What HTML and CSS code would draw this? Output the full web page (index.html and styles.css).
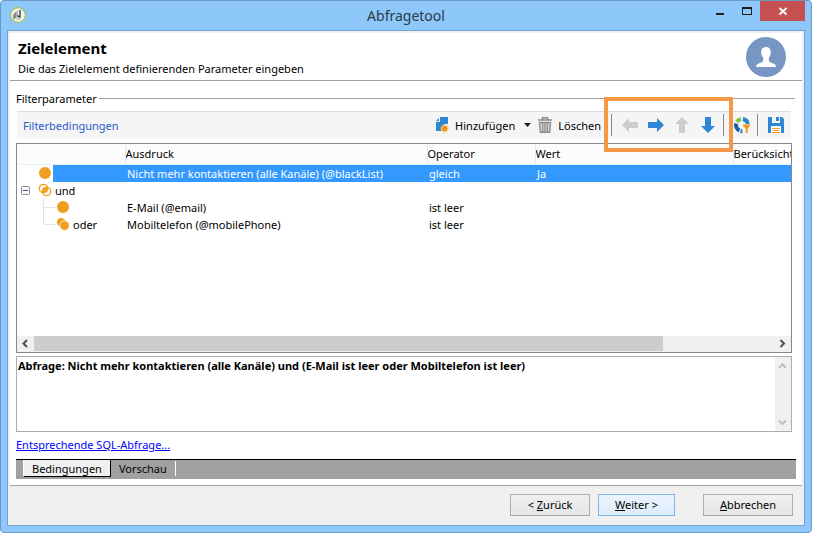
FILE: index.html
```html
<!DOCTYPE html>
<html lang="de">
<head>
<meta charset="utf-8">
<title>Abfragetool</title>
<link rel="stylesheet" href="styles.css">
</head>
<body>
<div class="window">
  <header class="titlebar">
    <svg class="app-icon" viewBox="0 0 16 16" aria-hidden="true">
      <circle cx="8" cy="8" r="7.4" fill="#f4f4ee" stroke="#a3c04c" stroke-width="1.1"/>
      <path d="M3 7.5 6 4.500v6L4.200 12.500 3 11z" fill="#8b8e8a"/>
      <path d="M6 4.500 8 3.500v6.500L6 11z" fill="#b4b7b2"/>
      <path d="M10 3v7.500M7.500 8.500l2.500 2" stroke="#33363a" stroke-width="1.300" fill="none"/>
      <path d="M6.500 12h4" stroke="#999" stroke-width="1"/>
    </svg>
    <h1 class="caption">Abfragetool</h1>
    <div class="window-buttons">
      <button class="win-button" type="button" aria-label="Minimieren">
        <svg width="10" height="10" viewBox="0 0 10 10"><path d="M1 7h8v2H1z" fill="#1e1e1e"/></svg>
      </button>
      <button class="win-button" type="button" aria-label="Maximieren">
        <svg width="10" height="10" viewBox="0 0 10 10"><path fill-rule="evenodd" d="M0 1h10v8H0zM1 3v5h8V3z" fill="#1e1e1e"/></svg>
      </button>
      <button class="win-button close" type="button" aria-label="Schließen">
        <svg width="10" height="10" viewBox="0 0 10 10"><path d="M1.500 2l7 6.500M8.500 2l-7 6.500" stroke="#fff" stroke-width="1.800"/></svg>
      </button>
    </div>
  </header>

  <main class="client">
    <section class="banner">
      <div class="banner-text">
        <h2 class="heading">Zielelement</h2>
        <p class="subtitle">Die das Zielelement definierenden Parameter eingeben</p>
      </div>
      <svg class="avatar" viewBox="0 0 40 40" aria-hidden="true">
        <circle cx="20" cy="20" r="20" fill="#7896c3"/>
        <path d="M20 10c3.200 0 4.800 2.200 4.800 5.200 0 2.600-.9 4.300-2 5.500v2.500c0 1.200 1 1.900 2.600 2.500 3 1.100 4.600 1.800 4.600 4.300H10c0-2.500 1.600-3.200 4.600-4.300 1.600-.6 2.600-1.300 2.600-2.500v-2.500c-1.100-1.200-2-2.900-2-5.500 0-3 1.600-5.200 4.800-5.200z" fill="#fff"/>
      </svg>
    </section>

    <section class="body">
      <h3 class="group-title">Filterparameter</h3>

      <div class="toolbar">
        <span class="toolbar-title">Filterbedingungen</span>
        <button class="tool add" type="button">
          <svg width="14" height="16" viewBox="0 0 14 16" aria-hidden="true">
            <path d="M5 0h8v7H9.500L6 10v4H1V5h4z" fill="#2e86d4"/>
            <path d="M1 4 4 1v3z" fill="#2e86d4"/>
            <path d="M9.500 7.500v8M5.500 11.500h8M6.700 8.700l5.600 5.600M12.300 8.700l-5.600 5.600" stroke="#f5b13c" stroke-width="1.400"/>
            <circle cx="9.500" cy="11.500" r="2.600" fill="#ef920f"/>
          </svg>
          Hinzufügen
          <svg class="caret" width="7" height="4" viewBox="0 0 7 4" aria-hidden="true"><path d="M0 0h7L3.500 4z" fill="#1e1e1e"/></svg>
        </button>
        <button class="tool" type="button">
          <svg width="14" height="16" viewBox="0 0 14 16" aria-hidden="true">
            <path d="M4.500 2.500V.800h5v1.700M0 3h14" fill="none" stroke="#8b8b8b" stroke-width="1.500"/>
            <path d="M1.500 5.500h11l-.8 9.700H2.300z" fill="#d5d5d5" stroke="#8b8b8b" stroke-width="1.400"/>
            <path d="M4.700 6v9M7 6v9M9.300 6v9" stroke="#8b8b8b" stroke-width="1.200"/>
          </svg>
          Löschen
        </button>
        <span class="separator"></span>
        <div class="arrows">
          <button class="icon-button" type="button" disabled aria-label="Nach links">
            <svg width="16" height="16" viewBox="0 0 16 16"><path d="M0 8 7 1v4h9v6H7v4z" fill="#cdcdcd"/></svg>
          </button>
          <button class="icon-button" type="button" aria-label="Nach rechts">
            <svg width="16" height="16" viewBox="0 0 16 16"><path d="M16 8 9 1v4H0v6h9v4z" fill="#2e86d4"/></svg>
          </button>
          <button class="icon-button" type="button" disabled aria-label="Nach oben">
            <svg width="16" height="16" viewBox="0 0 16 16"><path d="M8 0l7 7h-4v9H5V7H1z" fill="#cdcdcd"/></svg>
          </button>
          <button class="icon-button" type="button" aria-label="Nach unten">
            <svg width="16" height="16" viewBox="0 0 16 16"><path d="M8 16l7-7h-4V0H5v9H1z" fill="#2e86d4"/></svg>
          </button>
          <span class="highlight"></span>
        </div>
        <span class="separator"></span>
        <button class="icon-button" type="button" aria-label="Verteilung">
          <svg width="16" height="16" viewBox="0 0 16 16">
            <g fill="none" stroke-width="4">
              <path d="M8.800 2.100a6 6 0 0 1 5 4.900" stroke="#2e86d4"/>
              <path d="M2.900 4.900a6 6 0 0 1 4-2.800" stroke="#7cc142"/>
              <path d="M2.200 6.500a6 6 0 0 0 3.300 7" stroke="#1f5fa8"/>
              <path d="M6.500 13.900a6 6 0 0 0 2 .1" stroke="#2e86d4"/>
            </g>
            <path d="M9 7.500h7v1.500l-2.300 2.500V16h-2v-4.500L9 9z" fill="#f39c1b"/>
          </svg>
        </button>
        <span class="separator"></span>
        <button class="icon-button" type="button" aria-label="Speichern">
          <svg width="16" height="16" viewBox="0 0 16 16">
            <path d="M0 0h4v6h8V0h2l2 2v14h-3V9H3v7H0z" fill="#2e86d4"/>
            <path d="M8 0h3v4H8z" fill="#2e86d4"/>
            <path d="M3 10h10v6H3z" fill="#fff"/>
            <path d="M4 11h8v1H4zM5 13h6v1H5zM4 15h8v1H4z" fill="#f39c1b"/>
          </svg>
        </button>
      </div>

      <div class="grid">
        <table class="conditions">
          <colgroup><col class="c-tree"><col class="c-expr"><col class="c-op"><col class="c-val"><col></colgroup>
          <thead>
            <tr><th></th><th>Ausdruck</th><th>Operator</th><th>Wert</th><th>Berücksicht</th></tr>
          </thead>
          <tbody>
            <tr class="selected">
              <td class="tree">
                <span class="node level-1"><svg width="16" height="16" viewBox="0 0 16 16" aria-hidden="true"><circle cx="8" cy="8" r="6" fill="#ef9f1f"/></svg></span>
              </td>
              <td>Nicht mehr kontaktieren (alle Kanäle) (@blackList)</td><td>gleich</td><td>Ja</td><td></td>
            </tr>
            <tr>
              <td class="tree">
                <span class="node root">
                  <svg class="expander" width="9" height="9" viewBox="0 0 9 9" aria-hidden="true"><rect x=".5" y=".5" width="8" height="8" rx="1" fill="#f7f7f7" stroke="#8e8f8f"/><path d="M2 4.500h5" stroke="#3b5a9a"/></svg>
                  <svg width="16" height="16" viewBox="0 0 16 16" aria-hidden="true"><g fill="none" stroke="#ef9f1f" stroke-width="1.300"><circle cx="6.500" cy="6.500" r="4.200"/><circle cx="9.500" cy="9.500" r="4.200"/></g><path d="M5.300 9.500A4.200 4.200 0 0 1 9.500 5.300 4.200 4.200 0 0 1 10.700 6.500 4.200 4.200 0 0 1 6.500 10.700z" fill="#ef9f1f"/></svg>
                  und
                </span>
              </td>
              <td></td><td></td><td></td><td></td>
            </tr>
            <tr>
              <td class="tree">
                <span class="node level-2"><svg class="guide" width="12" height="17" viewBox="0 0 12 17" aria-hidden="true"><path d="M.5 0v17M1 8.500h11" fill="none" stroke="#e4e4e4"/></svg><svg width="16" height="16" viewBox="0 0 16 16" aria-hidden="true"><circle cx="8" cy="8" r="6" fill="#ef9f1f"/></svg></span>
              </td>
              <td>E-Mail (@email)</td><td>ist leer</td><td></td><td></td>
            </tr>
            <tr>
              <td class="tree">
                <span class="node level-2"><svg class="guide" width="12" height="17" viewBox="0 0 12 17" aria-hidden="true"><path d="M.5 0v8.500H12" fill="none" stroke="#e4e4e4"/></svg><svg width="16" height="16" viewBox="0 0 16 16" aria-hidden="true"><circle cx="6.200" cy="6.200" r="4.300" fill="#ef9f1f"/><circle cx="9.600" cy="9.600" r="4.800" fill="#ef9f1f" stroke="#fff" stroke-width=".8"/></svg>oder</span>
              </td>
              <td>Mobiltelefon (@mobilePhone)</td><td>ist leer</td><td></td><td></td>
            </tr>
          </tbody>
        </table>
        <div class="hscroll">
          <svg class="chevron" viewBox="0 0 17 15" aria-hidden="true"><path d="M10 4 6.500 7.500 10 11" fill="none" stroke="#505050" stroke-width="2"/></svg>
          <span class="track"><span class="thumb"></span></span>
          <svg class="chevron" viewBox="0 0 17 15" aria-hidden="true"><path d="M6.500 4 10 7.500 6.500 11" fill="none" stroke="#505050" stroke-width="2"/></svg>
        </div>
      </div>

      <div class="summary">
        <textarea class="summary-text" readonly aria-label="Abfrage">Abfrage: Nicht mehr kontaktieren (alle Kanäle) und (E-Mail ist leer oder Mobiltelefon ist leer)</textarea>
        <div class="vscroll">
          <svg width="15" height="17" viewBox="0 0 15 17" aria-hidden="true"><path d="M4 11 7.500 7.500 11 11" fill="none" stroke="#bfbfbf" stroke-width="2"/></svg>
          <svg width="15" height="17" viewBox="0 0 15 17" aria-hidden="true"><path d="M4 6.500 7.500 10 11 6.500" fill="none" stroke="#bfbfbf" stroke-width="2"/></svg>
        </div>
      </div>

      <a class="sql-link" href="#">Entsprechende SQL-Abfrage...</a>

      <div class="tabs" role="tablist">
        <button class="tab active" type="button" role="tab" aria-selected="true">Bedingungen</button>
        <button class="tab" type="button" role="tab" aria-selected="false">Vorschau</button>
      </div>
    </section>

    <footer class="footer">
      <button class="action back" type="button">&lt; <u>Z</u>urück</button>
      <button class="action next" type="button"><u>W</u>eiter &gt;</button>
      <button class="action cancel" type="button"><u>A</u>bbrechen</button>
    </footer>
  </main>
</div>
</body>
</html>
```
FILE: styles.css
```css
* {
  box-sizing: border-box;
}

body {
  display: flex;
  height: 100vh;
  margin: 0;
  padding: 0 11px 11px 0;
  background: #fff;
  color: #000;
  font: 11px/17px "Noto Sans", "Open Sans", sans-serif;
}

button,
textarea {
  font: inherit;
  color: inherit;
}

button {
  margin: 0;
  padding: 0;
  border: 0;
  background: none;
}

svg {
  flex: none;
  display: block;
}

.window {
  flex: 1;
  min-width: 0;
  display: flex;
  flex-direction: column;
  padding: 0 6px 6px;
  border: 1px solid #6a9ac8;
  border-radius: 4px;
  background: #8ec7fa;
}

/* Title bar */
.titlebar {
  display: grid;
  grid-template-columns: 1fr auto 1fr;
  align-items: start;
  height: 29px;
}

.app-icon {
  width: 16px;
  height: 16px;
  margin: 6px 0 0 3px;
}

.caption {
  margin: 0;
  color: #2b3a47;
  font-size: 14px;
  font-weight: 400;
  line-height: 29px;
}

.window-buttons {
  display: flex;
  justify-content: flex-end;
}

.win-button {
  display: flex;
  align-items: center;
  justify-content: center;
  width: 27px;
  height: 20px;
}

.win-button.close {
  width: 45px;
  background: #c75050;
}

/* Client area */
.client {
  flex: 1;
  min-height: 0;
  display: flex;
  flex-direction: column;
  border: 1px solid #6fa3d3;
  background: #fff;
  box-shadow: inset 0 0 0 2px #f0f0f0;
}

.banner {
  display: flex;
  justify-content: space-between;
  margin: 2px 2px 0;
  padding: 4px 16px 3px 8px;
  border-bottom: 1px solid #a0a0a0;
}

.heading {
  margin: 0;
  font-size: 15px;
  font-weight: 700;
  line-height: 22px;
}

.subtitle {
  margin: 1px 0 0;
}

.avatar {
  width: 40px;
  height: 40px;
}

.body {
  flex: 1;
  min-height: 0;
  display: flex;
  flex-direction: column;
  padding: 9px 8px 6px;
}

.group-title {
  display: flex;
  align-items: center;
  gap: 2px;
  margin: 0 1px 4px 0;
  font-size: 11px;
  font-weight: 400;
}

.group-title::after {
  content: "";
  flex: 1;
  height: 1px;
  background: #a0a0a0;
}

/* Toolbar */
.toolbar {
  display: flex;
  align-items: center;
  height: 27px;
  margin: 0 5px 5px 1px;
  padding: 0 7px 0 6px;
  border-top: 1px solid #dadada;
  background: #f5f5f5;
}

.toolbar-title {
  margin-right: auto;
  color: #2a5ac8;
}

.tool {
  display: flex;
  align-items: center;
  gap: 6px;
}

.add {
  margin-right: 7px;
}

.caret {
  margin-left: 3px;
}

.separator {
  width: 1px;
  height: 22px;
  margin: 0 10px 0 7px;
  background: #8a8a8a;
}

.tool + .separator {
  margin-left: 10px;
}

.icon-button {
  width: 16px;
  height: 16px;
}

.arrows {
  position: relative;
  display: flex;
  gap: 10px;
}

.highlight {
  position: absolute;
  inset: -20px -17px -19px -18px;
  border: 4px solid #f79646;
  pointer-events: none;
}

/* Condition grid */
.grid {
  flex: 1;
  min-height: 0;
  display: flex;
  flex-direction: column;
  justify-content: space-between;
  margin-right: 4px;
  border: 1px solid #828790;
}

.conditions {
  width: 100%;
  table-layout: fixed;
  border-collapse: collapse;
}

.c-tree {
  width: 108px;
}

.c-expr {
  width: 302px;
}

.c-op {
  width: 108px;
}

.c-val {
  width: 198px;
}

.conditions th,
.conditions td {
  overflow: hidden;
  padding: 0 0 0 2px;
  font-weight: 400;
  text-align: left;
  white-space: nowrap;
}

.conditions th {
  height: 20px;
  padding-left: 0;
  border-bottom: 1px solid #e8f1fb;
  background: #fcfcfc;
}

.conditions th:not(:last-child) {
  border-right: 1px solid #deecfa;
}

.conditions td {
  height: 17px;
}

.conditions td.tree {
  padding: 0;
}

.selected td {
  background: #3399ff;
  color: #fff;
}

.selected td.tree {
  background: linear-gradient(to right, #fff 36px, #3399ff 36px);
}

.node {
  display: flex;
  align-items: center;
  gap: 2px;
  height: 17px;
}

.root {
  padding-left: 4px;
}

.expander {
  margin-right: 5px;
}

.level-1 {
  padding-left: 20px;
}

.level-2 {
  padding-left: 26px;
}

.guide {
  margin-right: -2px;
}

.hscroll {
  display: flex;
  height: 16px;
  padding-bottom: 1px;
  background: #f0f0f0;
}

.chevron {
  width: 17px;
  height: 15px;
}

.track {
  flex: 1;
}

.thumb {
  display: block;
  width: 85%;
  height: 15px;
  background: #cdcdcd;
}

/* Summary */
.summary {
  display: flex;
  height: 76px;
  margin: 3px 4px 0 0;
  border: 1px solid #abadb3;
}

.summary-text {
  flex: 1;
  min-width: 0;
  padding: 0 1px;
  border: 0;
  outline: 0;
  resize: none;
  overflow: hidden;
  background: #fff;
  font-weight: 700;
}

.vscroll {
  display: flex;
  flex-direction: column;
  justify-content: space-between;
  width: 16px;
  background: #f0f0f0;
}

.sql-link {
  align-self: flex-start;
  margin: 4px 0 6px;
  color: #0000ff;
  text-decoration: underline;
}

/* Tabs */
.tabs {
  display: flex;
  height: 20px;
  padding-left: 7px;
  border-top: 1px solid #000;
  background: #a0a0a0;
}

.tab {
  height: 15px;
  margin-top: 1px;
  padding: 0 8px;
  border-right: 1px solid #fff;
  line-height: 15px;
}

.tab.active {
  height: 17px;
  margin-top: 0;
  border-right: 1px solid #000;
  border-bottom: 1px solid #000;
  border-left: 1px solid #fff;
  background: #f0f0f0;
}

/* Footer */
.footer {
  display: flex;
  justify-content: flex-end;
  gap: 8px;
  margin: 0 2px;
  padding: 8px 9px 9px;
  border-top: 1px solid #a0a0a0;
  background: #f0f0f0;
}

.action {
  width: 80px;
  height: 22px;
  border: 1px solid #acacac;
  background: linear-gradient(#f0f0f0, #e5e5e5);
  line-height: 16px;
}

.action.next {
  width: 77px;
  border-color: #7eb4ea;
  background: linear-gradient(#ecf4fc, #dcecfc);
}

.action.cancel {
  width: 90px;
  margin-left: 20px;
}
```
